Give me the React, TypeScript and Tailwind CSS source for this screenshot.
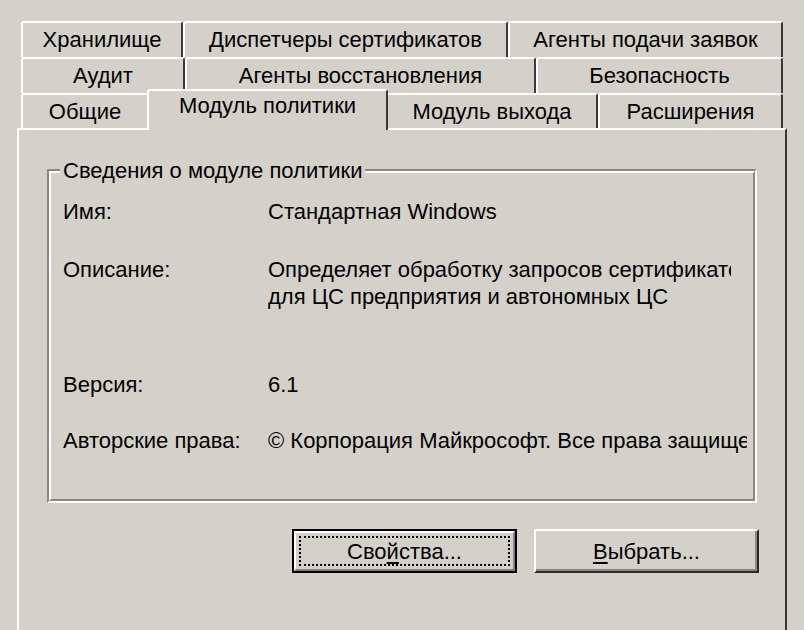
import React from "react";

function Tab({ w, label }: { w: number; label: string }) {
  return (
    <div
      className="h-full shrink-0 border-t-2 border-l-2 border-r-2 border-t-white border-l-white border-r-[#3a3a3a] rounded-t-[3px] pt-[3px] text-center leading-[27px] whitespace-nowrap"
      style={{ width: w }}
    >
      {label}
    </div>
  );
}

export default function App() {
  return (
    <div className="w-[804px] h-[630px] overflow-hidden bg-[#d4d1cb] text-black text-[22px] font-['Liberation_Sans',Arial,sans-serif] pl-[17px] pt-[21px]">
      <div className="w-[770px]">
        {/* tab rows */}
        <div className="px-[4px]">
          <div className="flex h-[36px]">
            <Tab w={162} label="Хранилище" />
            <Tab w={325} label="Диспетчеры сертификатов" />
            <Tab w={275} label="Агенты подачи заявок" />
          </div>
          <div className="flex h-[36px]">
            <Tab w={164} label="Аудит" />
            <Tab w={351} label="Агенты восстановления" />
            <Tab w={247} label="Безопасность" />
          </div>
          <div className="flex h-[35px] items-start">
            <Tab w={128} label="Общие" />
            <div className="relative z-10 -mt-[4px] -mx-[2px] w-[241px] h-[41px] shrink-0 bg-[#d4d1cb] border-t-2 border-l-2 border-r-2 border-t-white border-l-white border-r-[#3a3a3a] rounded-t-[3px] pt-[1px] text-center leading-[27px] whitespace-nowrap">
              Модуль политики
            </div>
            <Tab w={212} label="Модуль выхода" />
            <Tab w={185} label="Расширения" />
          </div>
        </div>

        {/* panel */}
        <div className="h-[520px] border-t-2 border-l-2 border-r-2 border-t-white border-l-white border-r-[#3a3a3a] px-[28px] pt-[39px]">
          {/* group box */}
          <div className="relative h-[334px] border-t-2 border-l-2 border-r-2 border-b-2 border-t-[#8a8883] border-l-[#8a8883] border-r-white border-b-white">
            <div className="h-full border-t-2 border-l-2 border-r-2 border-b-2 border-t-white border-l-white border-r-[#8a8883] border-b-[#8a8883] pl-[12px] pt-[25px] leading-[27px]">
              <div className="flex">
                <div className="w-[205px] shrink-0">Имя:</div>
                <div className="whitespace-nowrap">Стандартная Windows</div>
              </div>
              <div className="flex mt-[31px]">
                <div className="w-[205px] shrink-0">Описание:</div>
                <div className="w-[463px] overflow-hidden whitespace-nowrap">
                  <div>Определяет обработку запросов сертификатов</div>
                  <div>для ЦС предприятия и автономных ЦС</div>
                </div>
              </div>
              <div className="flex mt-[61px]">
                <div className="w-[205px] shrink-0">Версия:</div>
                <div>6.1</div>
              </div>
              <div className="flex mt-[29px]">
                <div className="w-[205px] shrink-0">Авторские права:</div>
                <div className="w-[479px] overflow-hidden whitespace-nowrap">
                  © Корпорация Майкрософт. Все права защищены.
                </div>
              </div>
            </div>
            <div className="absolute left-[11px] -top-[14px] px-[3px] bg-[#d4d1cb] leading-[27px] whitespace-nowrap">
              Сведения о модуле политики
            </div>
          </div>

          {/* buttons */}
          <div className="flex justify-end gap-[17px] mt-[26px] -mr-[2px]">
            <div className="w-[225px] h-[44px] border-2 border-black">
              <div className="h-full border-t-2 border-l-2 border-white border-r-2 border-b-2 border-r-[#808080] border-b-[#808080] p-[3px]">
                <div className="h-full border-2 border-dotted border-black flex items-center justify-center leading-[27px]">
                  <span>
                    Сво<span className="underline underline-offset-[3px]">й</span>ства...
                  </span>
                </div>
              </div>
            </div>
            <div className="w-[225px] h-[44px] border-t-2 border-l-2 border-t-white border-l-white border-r-2 border-b-2 border-r-[#2a2a2a] border-b-[#2a2a2a] shadow-[inset_-2px_-2px_0_#8a8883] flex items-center justify-center leading-[27px]">
              <span>
                <span className="underline underline-offset-[3px]">В</span>ыбрать...
              </span>
            </div>
          </div>
        </div>
      </div>
    </div>
  );
}
